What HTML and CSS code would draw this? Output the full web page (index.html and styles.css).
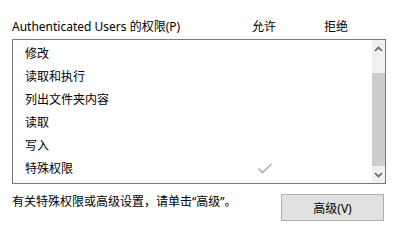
FILE: index.html
```html
<!DOCTYPE html>
<html>
<head>
<meta charset="utf-8">
<link rel="stylesheet" href="styles.css">
</head>
<body>
<div class="panel">
  <div class="header">
    <span class="label">Authenticated Users 的权限(P)</span>
    <span class="col">允许</span>
    <span class="col">拒绝</span>
  </div>
  <div class="listbox">
    <div class="rows">
      <div class="row"><span class="name">修改</span><span class="cell"></span><span class="cell"></span></div>
      <div class="row"><span class="name">读取和执行</span><span class="cell"></span><span class="cell"></span></div>
      <div class="row"><span class="name">列出文件夹内容</span><span class="cell"></span><span class="cell"></span></div>
      <div class="row"><span class="name">读取</span><span class="cell"></span><span class="cell"></span></div>
      <div class="row"><span class="name">写入</span><span class="cell"></span><span class="cell"></span></div>
      <div class="row"><span class="name">特殊权限</span><span class="cell"><svg class="check" width="16" height="12" viewBox="0 0 16 12"><path d="M1.5 5.5 L5.5 9.5 L14.5 1" fill="none" stroke="#b0b0b0" stroke-width="1.7"/></svg></span><span class="cell"></span></div>
    </div>
    <div class="scrollbar">
      <div class="arrow"><svg width="9" height="6" viewBox="0 0 9 6"><path d="M1 5 L4.5 1.5 L8 5" fill="none" stroke="#606060" stroke-width="1.6"/></svg></div>
      <div class="track"></div>
      <div class="thumb"></div>
      <div class="arrow"><svg width="9" height="6" viewBox="0 0 9 6"><path d="M1 1 L4.5 4.5 L8 1" fill="none" stroke="#606060" stroke-width="1.6"/></svg></div>
    </div>
  </div>
  <div class="footer">
    <span class="note">有关特殊权限或高级设置，请单击“高级”。</span>
    <button class="btn">高级(V)</button>
  </div>
</div>
</body>
</html>
```
FILE: styles.css
```css
html, body {
  margin: 0;
  padding: 0;
  background: #ffffff;
}
body {
  width: 396px;
  height: 242px;
  overflow: hidden;
  font-family: "Noto Sans", "Noto Sans CJK SC", sans-serif;
  font-size: 12px;
  color: #000000;
}
.panel {
  padding: 19px 10px 0 12px;
}
.header {
  display: grid;
  grid-template-columns: 216px 72px 72px 14px;
  height: 16px;
  line-height: 16px;
  margin-bottom: 4px;
}
.col {
  text-align: center;
}
.listbox {
  width: 372px;
  height: 143px;
  border: 1px solid #7a7a7a;
  display: flex;
}
.rows {
  flex: 1;
  padding-top: 2px;
}
.row {
  display: grid;
  grid-template-columns: 215px 72px 72px;
  height: 23px;
  line-height: 23px;
}
.name {
  padding-left: 12px;
}
.cell {
  display: flex;
  align-items: center;
  justify-content: center;
}
.check {
  margin-left: 2px;
}
.scrollbar {
  width: 17px;
  display: flex;
  flex-direction: column;
  background: #f0f0f0;
}
.arrow {
  height: 17px;
  display: flex;
  align-items: center;
  justify-content: center;
}
.track {
  height: 16px;
}
.thumb {
  flex: 1;
  background: #cdcdcd;
}
.footer {
  display: flex;
  justify-content: space-between;
  align-items: flex-start;
  margin-top: 10px;
  width: 372px;
}
.note {
  line-height: 16px;
}
.btn {
  width: 103px;
  height: 27px;
  margin: 0;
  padding: 0;
  border: 1px solid #adadad;
  background: #e1e1e1;
  font-family: "Noto Sans", "Noto Sans CJK SC", sans-serif;
  font-size: 12px;
  color: #000000;
}
```
